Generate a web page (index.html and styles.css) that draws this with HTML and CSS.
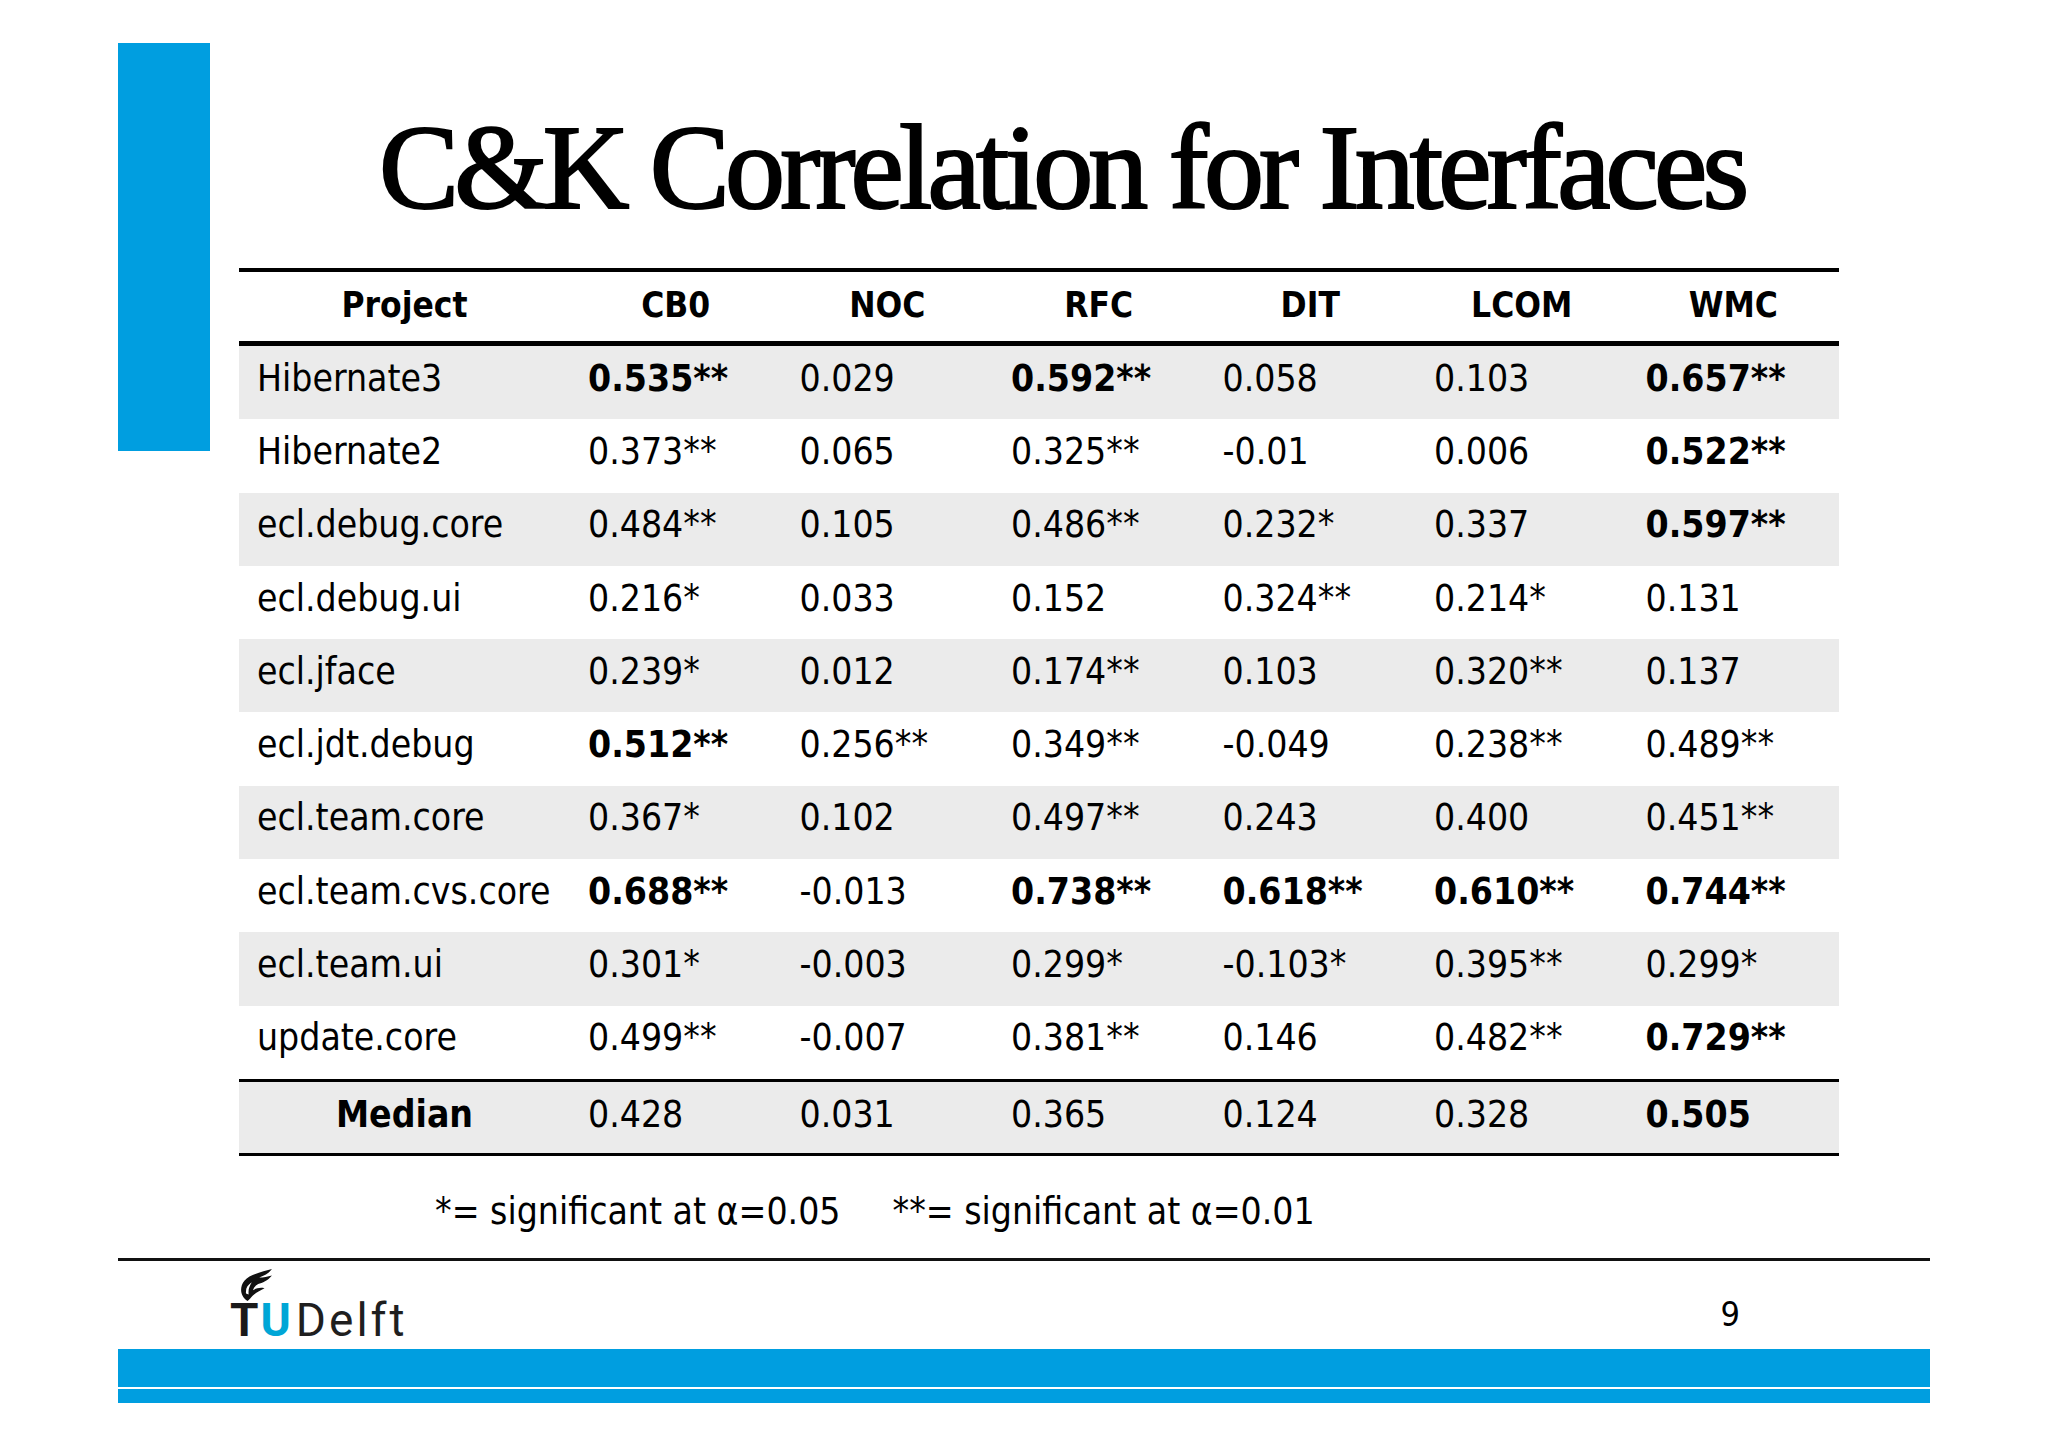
FILE: index.html
```html
<!DOCTYPE html>
<html lang="en">
<head>
<meta charset="utf-8">
<title>C&amp;K Correlation for Interfaces</title>
<link rel="stylesheet" href="styles.css">
</head>
<body>
<div class="slide">
  <div class="top">
    <div class="accent"></div>
    <main class="content">
      <h1 class="title">C&amp;K Correlation for Interfaces</h1>
      <div class="table">
        <div class="row head">
          <div class="th">Project</div><div class="th">CB0</div><div class="th">NOC</div><div class="th">RFC</div><div class="th">DIT</div><div class="th">LCOM</div><div class="th">WMC</div>
        </div>
        <div class="row alt">
          <div class="td">Hibernate3</div><div class="td b">0.535**</div><div class="td">0.029</div><div class="td b">0.592**</div><div class="td">0.058</div><div class="td">0.103</div><div class="td b">0.657**</div>
        </div>
        <div class="row">
          <div class="td">Hibernate2</div><div class="td">0.373**</div><div class="td">0.065</div><div class="td">0.325**</div><div class="td">-0.01</div><div class="td">0.006</div><div class="td b">0.522**</div>
        </div>
        <div class="row alt">
          <div class="td">ecl.debug.core</div><div class="td">0.484**</div><div class="td">0.105</div><div class="td">0.486**</div><div class="td">0.232*</div><div class="td">0.337</div><div class="td b">0.597**</div>
        </div>
        <div class="row">
          <div class="td">ecl.debug.ui</div><div class="td">0.216*</div><div class="td">0.033</div><div class="td">0.152</div><div class="td">0.324**</div><div class="td">0.214*</div><div class="td">0.131</div>
        </div>
        <div class="row alt">
          <div class="td">ecl.jface</div><div class="td">0.239*</div><div class="td">0.012</div><div class="td">0.174**</div><div class="td">0.103</div><div class="td">0.320**</div><div class="td">0.137</div>
        </div>
        <div class="row">
          <div class="td">ecl.jdt.debug</div><div class="td b">0.512**</div><div class="td">0.256**</div><div class="td">0.349**</div><div class="td">-0.049</div><div class="td">0.238**</div><div class="td">0.489**</div>
        </div>
        <div class="row alt">
          <div class="td">ecl.team.core</div><div class="td">0.367*</div><div class="td">0.102</div><div class="td">0.497**</div><div class="td">0.243</div><div class="td">0.400</div><div class="td">0.451**</div>
        </div>
        <div class="row">
          <div class="td">ecl.team.cvs.core</div><div class="td b">0.688**</div><div class="td">-0.013</div><div class="td b">0.738**</div><div class="td b">0.618**</div><div class="td b">0.610**</div><div class="td b">0.744**</div>
        </div>
        <div class="row alt">
          <div class="td">ecl.team.ui</div><div class="td">0.301*</div><div class="td">-0.003</div><div class="td">0.299*</div><div class="td">-0.103*</div><div class="td">0.395**</div><div class="td">0.299*</div>
        </div>
        <div class="row">
          <div class="td">update.core</div><div class="td">0.499**</div><div class="td">-0.007</div><div class="td">0.381**</div><div class="td">0.146</div><div class="td">0.482**</div><div class="td b">0.729**</div>
        </div>
        <div class="row median">
          <div class="td label">Median</div><div class="td">0.428</div><div class="td">0.031</div><div class="td">0.365</div><div class="td">0.124</div><div class="td">0.328</div><div class="td b">0.505</div>
        </div>
      </div>
      <p class="note"><span>*= significant at α=0.05</span><span>**= significant at α=0.01</span></p>
    </main>
  </div>
  <footer class="footer">
    <div class="rule"></div>
    <div class="foot-row">
      <div class="logo">
        <svg class="flame" width="36" height="32" viewBox="0 0 34 30" aria-hidden="true">
          <path d="M10 30 C3 26 2 17 7 11 C11 6 19 4 25 2 L33 0 C30 4 26 6 21 8 C25 8 29 7 33 6 C29 11 24 13 20 14 C18 15 16 17 15 20 C18 18 22 17 26 18 C22 20 18 22 15 25 C13 27 12 29 10 30 Z M8.5 23 C8 18 10 15 14 12.5 C11.5 16.5 10.5 19.5 11 24 Z" fill="#111" fill-rule="evenodd"/>
        </svg>
        <div class="wordmark"><span class="tu-t">T</span><span class="tu-u">U</span><span class="delft">Delft</span></div>
      </div>
      <div class="page-num">9</div>
    </div>
    <div class="bar"></div>
    <div class="bar-thin"></div>
  </footer>
</div>
</body>
</html>
```
FILE: styles.css
```css
html, body {
  margin: 0;
  padding: 0;
  background: #ffffff;
}

body {
  font-family: "DejaVu Sans Condensed", "DejaVu Sans", sans-serif;
  font-stretch: condensed;
  color: #000;
}

.slide {
  width: 2048px;
  height: 1447px;
  overflow: hidden;
}

.top {
  display: flex;
  height: 1258px;
}

.accent {
  flex: none;
  width: 92px;
  height: 408px;
  margin: 43px 0 0 118px;
  background: #009ee0;
}

.content {
  margin-left: 29px;
}

.title {
  margin: 108px 0 0 140px;
  font-family: "Liberation Serif", "Times New Roman", serif;
  font-stretch: normal;
  font-weight: normal;
  font-size: 120px;
  line-height: 120px;
  letter-spacing: -4.8px;
  white-space: nowrap;
  -webkit-text-stroke: 2.2px #000;
  color: #000;
}

.table {
  width: 1600px;
  margin-top: 40px;
  border-top: 4px solid #000;
  border-bottom: 3px solid #000;
}

.row {
  display: grid;
  grid-template-columns: 331px repeat(6, 1fr);
  align-items: center;
  height: 73.3px;
}

.row.alt {
  background: #ebebeb;
}

.row.head {
  height: 69px;
  border-bottom: 5px solid #000;
}

.row.median {
  height: 71px;
  border-top: 3px solid #000;
  background: #ebebeb;
}

.th {
  text-align: center;
  font-weight: bold;
  font-size: 35px;
  line-height: 35px;
  padding-bottom: 3px;
  white-space: nowrap;
}

.td {
  padding-left: 18px;
  font-size: 37px;
  line-height: 37px;
  padding-bottom: 9px;
  white-space: nowrap;
}

.row.median .td {
  padding-bottom: 6px;
}

.td.b {
  font-weight: bold;
}

.td.label {
  padding-left: 0;
  text-align: center;
  font-weight: bold;
}

.note {
  display: flex;
  gap: 52px;
  margin: 34px 0 0 196px;
  font-size: 37px;
  line-height: 43px;
  white-space: nowrap;
}

.footer {
  padding: 0 118px;
}

.rule {
  height: 3px;
  background: #111;
}

.foot-row {
  display: flex;
  justify-content: space-between;
  align-items: flex-start;
  height: 88px;
}

.logo {
  display: flex;
  flex-direction: column;
  margin: 8px 0 0 112px;
}

.flame {
  display: block;
  margin-left: 7px;
}

.wordmark {
  margin-top: -4px;
  font-family: Roboto, "Liberation Sans", sans-serif;
  font-stretch: normal;
  font-size: 46px;
  line-height: 46px;
  white-space: nowrap;
}

.tu-t {
  font-weight: bold;
  color: #1a1a1a;
}

.tu-u {
  font-weight: bold;
  color: #00a6d6;
  margin-left: 2px;
  margin-right: 5px;
}

.delft {
  color: #1f1f1f;
  letter-spacing: 3px;
}

.page-num {
  margin: 36px 190px 0 0;
  font-size: 34px;
  line-height: 34px;
}

.bar {
  height: 38px;
  background: #009ee0;
}

.bar-thin {
  height: 14px;
  margin-top: 2px;
  background: #009ee0;
}
```
